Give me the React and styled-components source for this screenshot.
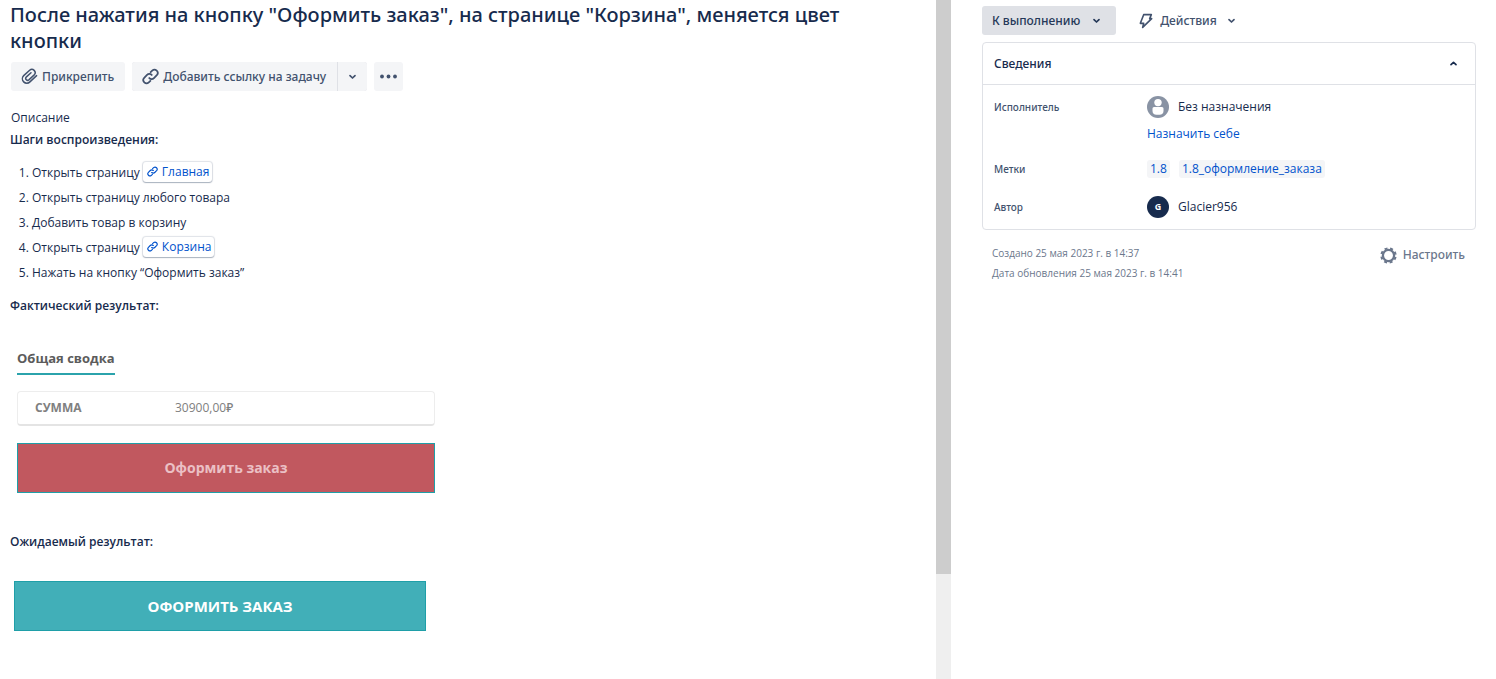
import React from "react";
import styled, { createGlobalStyle } from "styled-components";

const GlobalStyle = createGlobalStyle`
  *, *::before, *::after { box-sizing: border-box; }
  body {
    margin: 0;
    background: #fff;
    color: #172b4d;
    font-family: "Open Sans", "Noto Sans", sans-serif;
    font-size: 12px;
    line-height: 22px;
  }
  button { font: inherit; color: inherit; border: 0; background: none; padding: 0; cursor: pointer; }
  h1, h2, h3, p, ol, dl, dd, dt { margin: 0; padding: 0; }
  a { color: #0052cc; text-decoration: none; }
  svg { display: block; flex: none; }
`;

const Page = styled.div`
  display: grid;
  grid-template-columns: minmax(0, 936fr) 15px minmax(0, 545fr);
  min-height: 100vh;
`;

const Main = styled.main`
  padding: 2px 24px 24px 10px;
`;

const ScrollTrack = styled.div`
  background: #efefef;
`;

const ScrollThumb = styled.div`
  height: 84.5%;
  background: #cdcdcd;
`;

const Aside = styled.aside`
  padding: 6px 20px 24px 31px;
`;

const Title = styled.h1`
  font-family: "Noto Sans", "Open Sans", sans-serif;
  font-size: 20px;
  line-height: 26px;
  font-weight: 500;
`;

const Toolbar = styled.div`
  display: flex;
  gap: ${(p) => p.$gap || 7}px;
  margin-top: ${(p) => p.$top || 0}px;
  margin-left: ${(p) => p.$left || 0}px;
`;

const SplitButton = styled.div`
  display: flex;
  gap: 1px;
  background: #dfe1e6;
  border-radius: 3px;
  overflow: hidden;
`;

const tones = {
  subtle: { bg: "#f4f5f7", fg: "#42526e" },
  status: { bg: "#dfe1e6", fg: "#253858" },
  plain: { bg: "transparent", fg: "#42526e" },
};

const Button = styled.button`
  && {
    display: inline-flex;
    align-items: center;
    justify-content: center;
    gap: ${(p) => p.$gap || 4}px;
    height: 29px;
    padding: ${(p) => (p.$iconOnly ? "0 6px" : "0 11px 0 10px")};
    border-radius: ${(p) => (p.$joined ? 0 : 3)}px;
    background: ${(p) => tones[p.$tone || "subtle"].bg};
    color: ${(p) => tones[p.$tone || "subtle"].fg};
    font-family: "Noto Sans", "Open Sans", sans-serif;
    font-weight: 500;
    white-space: nowrap;
  }
`;

const FieldTitle = styled.h2`
  margin: 16px 0 0 1px;
  font-size: 12px;
  font-weight: 500;
`;

const Heading = styled.h3`
  margin-top: ${(p) => p.$top || 0}px;
  font-size: 12px;
  font-weight: 600;
`;

const Steps = styled.ol`
  && { margin-top: 9px; padding-left: 22px; }
`;

const Step = styled.li`
  height: 25px;
  line-height: 25px;
`;

const SmartLink = styled.a`
  display: inline-flex;
  align-items: center;
  gap: 4px;
  height: 20px;
  padding: 0 3px 0 4px;
  border-radius: 3px;
  box-shadow: 0 1px 1px rgba(9, 30, 66, 0.25), 0 0 1px 1px rgba(9, 30, 66, 0.13);
  line-height: 20px;
`;

const Summary = styled.section`
  max-width: 425px;
  margin-top: 30px;
  padding: 0 0 0 7px;
  color: #5c5c5c;
`;

const SummaryTitle = styled.h3`
  width: max-content;
  height: 28px;
  border-bottom: 2px solid #2ba3ac;
  font-size: 13px;
  font-weight: 700;
`;

const SumBox = styled.dl`
  && { margin-top: 16px; }
  display: grid;
  grid-template-columns: 140px 1fr;
  align-items: center;
  height: 35px;
  padding: 0 17px;
  border: 1px solid #ededed;
  border-bottom: 2px solid #e4e4e4;
  border-radius: 4px;
  color: #808080;
`;

const SumLabel = styled.dt`
  font-weight: 700;
`;

const SumValue = styled.dd`
  font-weight: 500;
`;

const OrderButton = styled.button`
  && {
    display: block;
    width: 100%;
    height: 50px;
    border: 1px solid #1f9fa8;
    background: ${(p) => (p.$pressed ? "#c1585f" : "#41afb8")};
    color: ${(p) => (p.$pressed ? "#ebc0c5" : "#fff")};
    font-size: ${(p) => (p.$pressed ? 14 : 15)}px;
    font-weight: 700;
    margin-top: ${(p) => (p.$pressed ? 17 : 28)}px;
  }
`;

const Expected = styled.section`
  max-width: 416px;
  padding-left: 4px;
`;

const Card = styled.section`
  margin-top: 7px;
  border: 1px solid #dfe1e6;
  border-radius: 4px;
`;

const CardHeader = styled.button`
  && {
    display: flex;
    align-items: center;
    justify-content: space-between;
    width: 100%;
    height: 42px;
    padding: 0 13px 0 11px;
    border-bottom: 1px solid #dfe1e6;
    font-family: "Noto Sans", "Open Sans", sans-serif;
    font-weight: 500;
  }
`;

const Details = styled.dl`
  display: grid;
  grid-template-columns: 153px 1fr;
  row-gap: 16px;
  && { padding: 11px; }
`;

const Label = styled.dt`
  color: #42526e;
  font-family: "Noto Sans", "Open Sans", sans-serif;
  font-size: 10px;
  font-weight: 500;
`;

const Value = styled.dd`
  display: flex;
  flex-wrap: wrap;
  align-items: center;
  column-gap: 9px;
  row-gap: 8px;
`;

const AssignLink = styled.a`
  flex-basis: 100%;
  line-height: 16px;
`;

const Tag = styled.a`
  height: 18px;
  padding: 0 3px;
  border-radius: 3px;
  background: #f4f5f7;
  line-height: 18px;
`;

const Avatar = styled.span`
  display: grid;
  place-items: center;
  width: 22px;
  height: 22px;
  border-radius: 50%;
  background: #172b4d;
  color: #fff;
  font-size: 9px;
  font-weight: 700;
`;

const Footer = styled.footer`
  display: flex;
  justify-content: space-between;
  align-items: flex-start;
  margin-top: 13px;
  padding: 0 11px 0 10px;
  color: #6b778c;
`;

const Dates = styled.div`
  font-size: 10px;
  line-height: 20px;
`;

const Configure = styled.button`
  && {
    display: flex;
    align-items: center;
    gap: 6px;
    height: 24px;
    color: #6b778c;
    font-family: "Noto Sans", "Open Sans", sans-serif;
    font-weight: 500;
  }
`;

function Icon({ size = 16, width = 2, children }) {
  return (
    <svg width={size} height={size} viewBox="0 0 24 24" fill="none" stroke="currentColor"
      strokeWidth={width} strokeLinecap="round" strokeLinejoin="round" aria-hidden="true">
      {children}
    </svg>
  );
}

const Chevron = ({ up }) => (
  <svg width="17" height="17" viewBox="0 0 17 17" fill="none" stroke="currentColor"
    strokeWidth="1.7" strokeLinecap="round" strokeLinejoin="round" aria-hidden="true">
    <path d={up ? "M6 9.7 8.5 7.3 11 9.7" : "M6 7.6 8.5 10 11 7.6"} />
  </svg>
);

const Clip = () => (
  <Icon size={17} width={2.1}>
    <path d="M22 10.8 12.6 19.6a6.2 6.2 0 0 1-8.8-8.8l8.4-7.6a4.6 4.6 0 0 1 6.5 6.5l-7.6 7a2.7 2.7 0 0 1-3.8-3.8l6.8-6.2" />
  </Icon>
);

const Link = ({ size = 17 }) => (
  <Icon size={size} width={2.5}>
    <path d="M10.3 14.2a4.6 4.6 0 0 0 6.6 0l4-4a4.6 4.6 0 0 0-6.5-6.5l-2.2 2.1" />
    <path d="M13.7 9.8a4.6 4.6 0 0 0-6.6 0l-4 4a4.6 4.6 0 0 0 6.5 6.5l2.2-2.1" />
  </Icon>
);

const Bolt = () => (
  <Icon size={16} width={2.4}>
    <path d="M8.5 2.5H20L17.5 8.5H20.5L7 21.5 8.5 15.5H3.5Z" />
  </Icon>
);

const Dots = () => (
  <svg width="17" height="17" viewBox="0 0 17 17" fill="currentColor" aria-hidden="true">
    <circle cx="2" cy="8.5" r="1.9" />
    <circle cx="8.5" cy="8.5" r="1.9" />
    <circle cx="15" cy="8.5" r="1.9" />
  </svg>
);

const Gear = () => (
  <svg width="17" height="17" viewBox="0 0 17 17" fill="none" stroke="currentColor" aria-hidden="true">
    <circle cx="8.5" cy="8.5" r="5.6" strokeWidth="2.3" />
    <circle cx="8.5" cy="8.5" r="7.2" strokeWidth="2" strokeDasharray="3 2.655" strokeDashoffset="-1.4" />
  </svg>
);

const Person = () => (
  <svg width="22" height="22" viewBox="0 0 22 22" aria-hidden="true">
    <circle cx="11" cy="11" r="11" fill="#8993a4" />
    <circle cx="11" cy="6.6" r="3.7" fill="#fff" />
    <path d="M5.5 12.5a1.5 1.5 0 0 1 1.5-1.5h8a1.5 1.5 0 0 1 1.5 1.5v2.5a4 4 0 0 1-4 3.8h-3a4 4 0 0 1-4-3.8Z" fill="#fff" />
  </svg>
);

export default function App() {
  return (
    <>
      <GlobalStyle />
      <Page>
        <Main>
          <Title>
            После нажатия на кнопку "Оформить заказ", на странице "Корзина", меняется цвет кнопки
          </Title>
          <Toolbar $top={8} $left={1}>
            <Button><Clip />Прикрепить</Button>
            <SplitButton>
              <Button $joined><Link />Добавить ссылку на задачу</Button>
              <Button $joined $iconOnly aria-label="Ещё варианты ссылки"><Chevron /></Button>
            </SplitButton>
            <Button $iconOnly aria-label="Другие действия"><Dots /></Button>
          </Toolbar>

          <FieldTitle>Описание</FieldTitle>
          <Heading>Шаги воспроизведения:</Heading>
          <Steps>
            <Step>Открыть страницу <SmartLink href="#main"><Link size={11} />Главная</SmartLink></Step>
            <Step>Открыть страницу любого товара</Step>
            <Step>Добавить товар в корзину</Step>
            <Step>Открыть страницу <SmartLink href="#cart"><Link size={11} />Корзина</SmartLink></Step>
            <Step>Нажать на кнопку “Оформить заказ”</Step>
          </Steps>

          <Heading $top={10}>Фактический результат:</Heading>
          <Summary>
            <SummaryTitle>Общая сводка</SummaryTitle>
            <SumBox>
              <SumLabel>СУММА</SumLabel>
              <SumValue>30900,00₽</SumValue>
            </SumBox>
            <OrderButton $pressed>Оформить заказ</OrderButton>
          </Summary>

          <Heading $top={38}>Ожидаемый результат:</Heading>
          <Expected>
            <OrderButton>ОФОРМИТЬ ЗАКАЗ</OrderButton>
          </Expected>
        </Main>

        <ScrollTrack aria-hidden="true"><ScrollThumb /></ScrollTrack>

        <Aside>
          <Toolbar $gap={12}>
            <Button $tone="status" $gap={8}>К выполнению<Chevron /></Button>
            <Button $tone="plain" $gap={6}><Bolt />Действия<Chevron /></Button>
          </Toolbar>
          <Card>
            <CardHeader aria-expanded="true">Сведения<Chevron up /></CardHeader>
            <Details>
              <Label>Исполнитель</Label>
              <Value>
                <Person />Без назначения
                <AssignLink href="#assign">Назначить себе</AssignLink>
              </Value>
              <Label>Метки</Label>
              <Value>
                <Tag href="#1.8">1.8</Tag>
                <Tag href="#1.8-order">1.8_оформление_заказа</Tag>
              </Value>
              <Label>Автор</Label>
              <Value><Avatar>G</Avatar>Glacier956</Value>
            </Details>
          </Card>
          <Footer>
            <Dates>
              <p>Создано 25 мая 2023 г. в 14:37</p>
              <p>Дата обновления 25 мая 2023 г. в 14:41</p>
            </Dates>
            <Configure><Gear />Настроить</Configure>
          </Footer>
        </Aside>
      </Page>
    </>
  );
}
